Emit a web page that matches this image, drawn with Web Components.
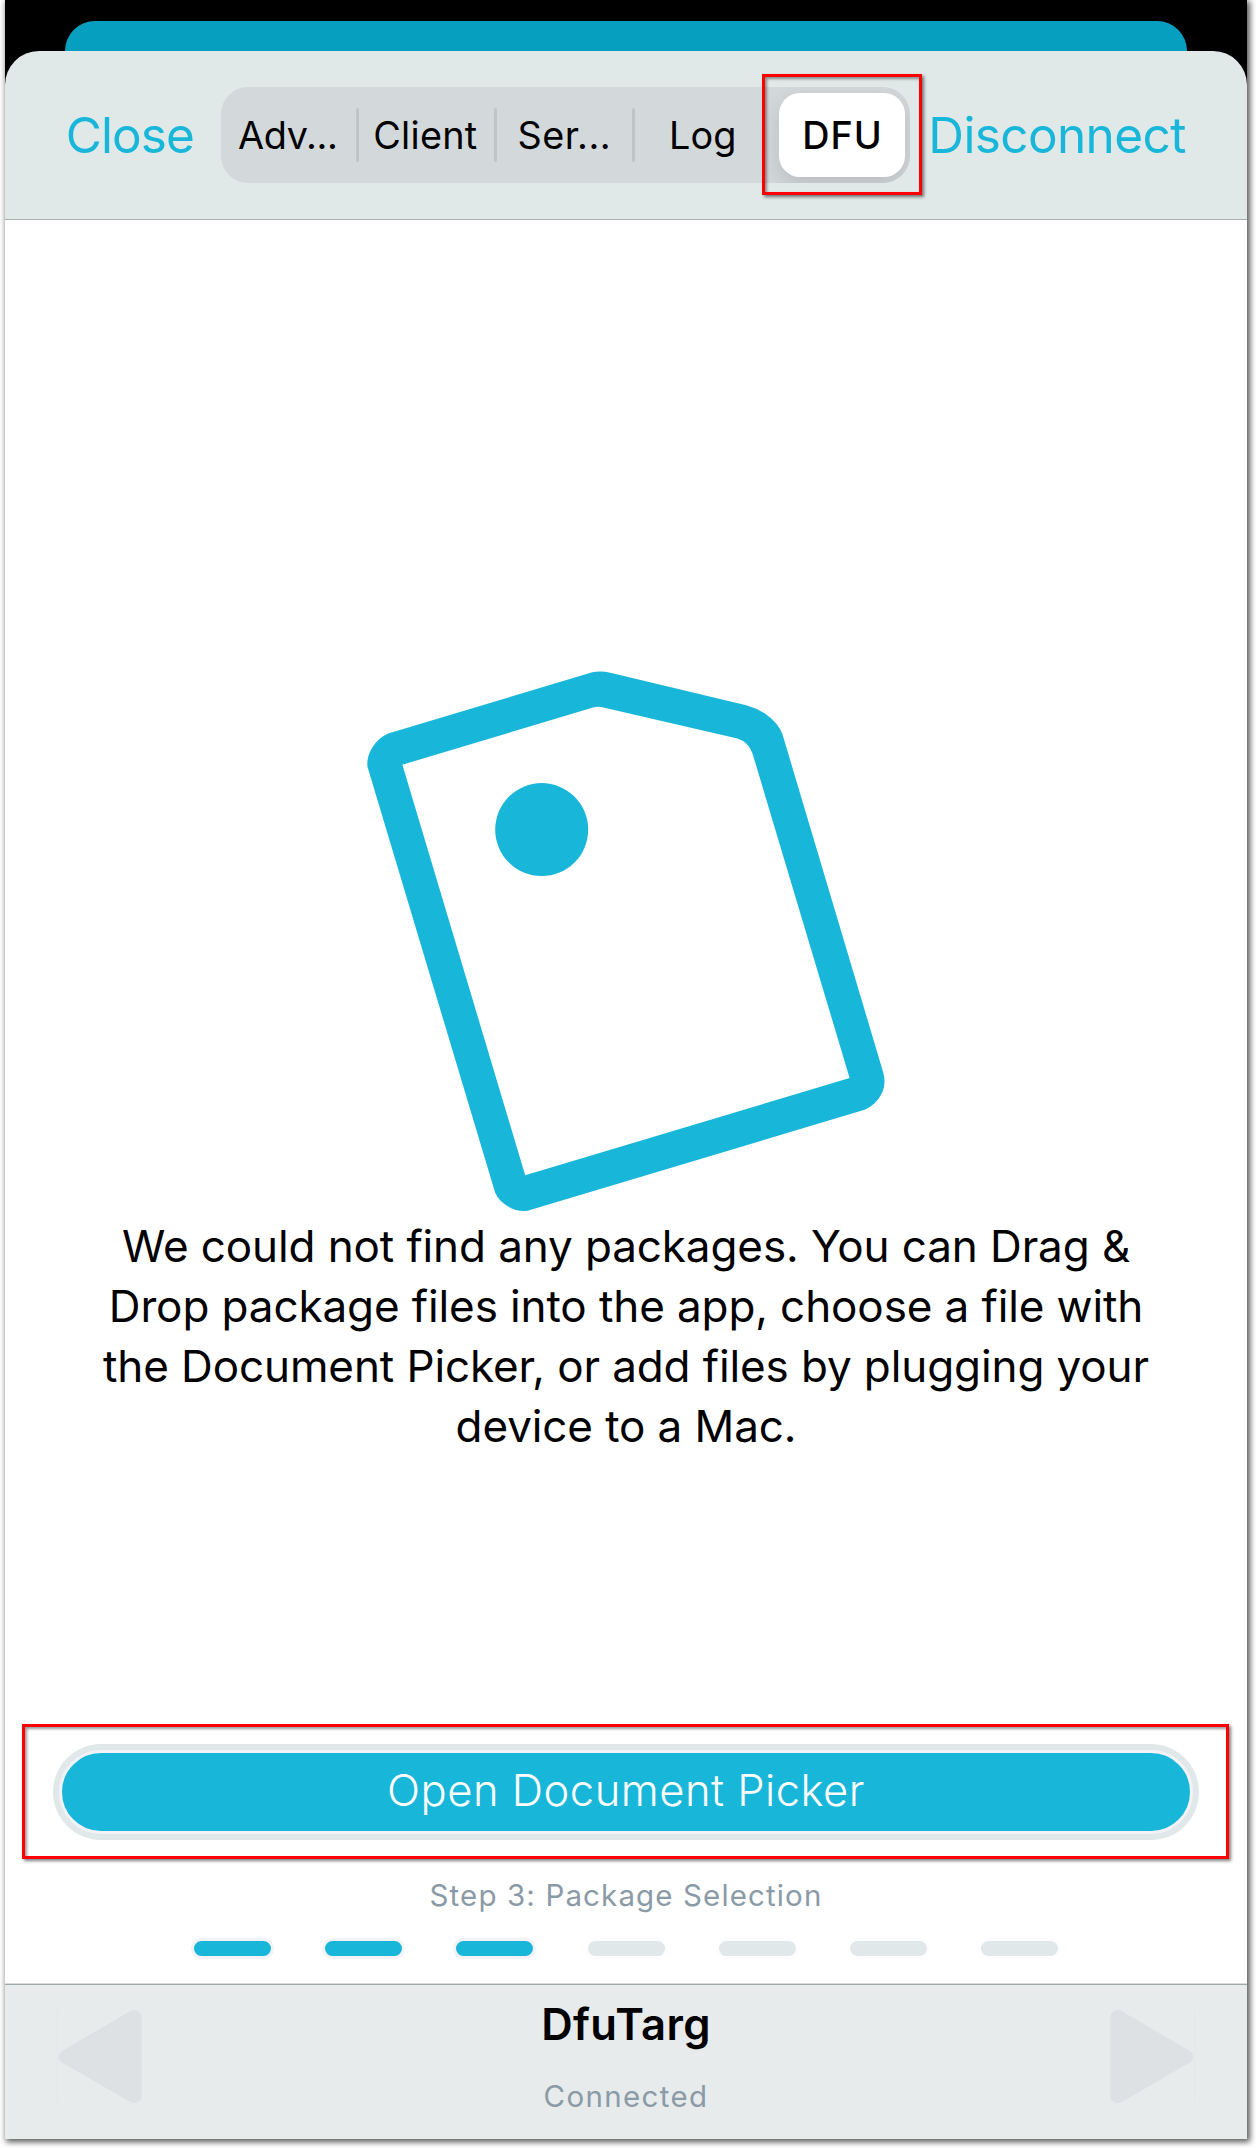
<!DOCTYPE html>
<html lang="en">
<head>
<meta charset="utf-8">
<title>DFU</title>
<style>
  html, body { margin: 0; background: #fff; }
  body { width: 1256px; height: 2148px; overflow: hidden; font-family: Inter, "Liberation Sans", sans-serif; color: #000; }
</style>
</head>
<body>
<phone-screen>
  <nav-header slot="header">
    <nav-link slot="start" style="--ls:-0.91px">Close</nav-link>
    <segmented-control>
      <segment-item style="--w:136px;--pad:17px;--ls:-0.35px">Adv...</segment-item>
      <segment-item divided style="--w:138px;--pad:15.2px;--ls:0.28px">Client</segment-item>
      <segment-item divided style="--w:138px;--pad:21.5px;--ls:0.47px">Ser...</segment-item>
      <segment-item divided style="--w:139px;--pad:35px;--ls:0.13px">Log</segment-item>
      <segment-item selected style="--w:138px;--pad:23.3px;--ls:1px">DFU</segment-item>
    </segmented-control>
    <nav-link slot="end" style="--ls:-0.62px">Disconnect</nav-link>
  </nav-header>
  <empty-state>
    <span>We could not find any packages. You can Drag &amp;</span>
    <span>Drop package files into the app, choose a file with</span>
    <span>the Document Picker, or add files by plugging your</span>
    <span>device to a Mac.</span>
  </empty-state>
  <callout-frame><pill-button>Open Document Picker</pill-button></callout-frame>
  <step-progress total="7" done="3">Step 3: Package Selection</step-progress>
  <device-bar slot="footer">
    <span>DfuTarg</span>
    <span slot="status">Connected</span>
  </device-bar>
</phone-screen>

<script>
const define = (name, html, setup) => {
  const template = document.createElement('template');
  template.innerHTML = html;
  customElements.define(name, class extends HTMLElement {
    constructor() {
      super();
      this.attachShadow({ mode: 'open' }).append(template.content.cloneNode(true));
    }
    connectedCallback() { if (setup) setup(this, this.shadowRoot); }
  });
};

define('phone-screen', `
<style>
  :host { display: flex; flex-direction: column; box-sizing: border-box; width: 1242px; height: 2139px; margin-left: 5px; background: #fff; box-shadow: 2px 2px 6px 1px rgba(0,0,0,.66); }
  .top { display: flex; flex-direction: column; padding-top: 21px; background: #000; }
  .behind { height: 30px; margin: 0 60px; border-radius: 30px 30px 0 0; background: #079fc0; }
  main { flex: 1; display: flex; flex-direction: column; }
</style>
<div class="top"><div class="behind"></div><slot name="header"></slot></div>
<main><slot></slot></main>
<slot name="footer"></slot>`);

define('nav-header', `
<style>
  :host { display: flex; align-items: center; box-sizing: border-box; height: 169px; padding-left: 60.7px; border-bottom: 1px solid #a9b0b1; border-radius: 34px 34px 0 0; background: #e0e9e8; }
  .start { width: 155.3px; }
  .end { margin-left: 18.3px; }
</style>
<div class="start"><slot name="start"></slot></div>
<slot></slot>
<div class="end"><slot name="end"></slot></div>`);

define('nav-link', `
<style>
  :host { display: block; color: #18b7da; font-size: 49.5px; line-height: 60px; letter-spacing: var(--ls); white-space: nowrap; }
</style>
<slot></slot>`);

define('segmented-control', `
<style>
  :host { position: relative; display: block; }
  .track { display: flex; width: 689px; height: 96px; border-radius: 27px; background: #d3d8db; overflow: hidden; }
  .mark { position: absolute; left: 541px; top: -13px; box-sizing: border-box; width: 160px; height: 121px; border: 3px solid #f00; box-shadow: 2px 2px 3px rgba(0,0,0,.5), inset 2px 2px 3px rgba(0,0,0,.4); }
</style>
<div class="track"><slot></slot></div><div class="mark"></div>`);

define('segment-item', `
<style>
  :host { display: flex; align-items: center; width: var(--w); font-size: 37.8px; line-height: 46px; letter-spacing: var(--ls); white-space: nowrap; }
  .label { padding-left: var(--pad); }
  .rule { display: none; width: 3px; height: 54px; margin-left: -1px; margin-right: -1px; border-radius: 1.5px; background: #c0c5c8; }
  :host([divided]) .rule { display: block; }
  :host([selected]) .label { display: flex; align-items: center; box-sizing: border-box; width: 126px; height: 84px; margin-left: 7px; border-radius: 21px; background: #fff; font-weight: 550; box-shadow: 0 8px 22px rgba(0,0,0,.13); }
</style>
<div class="rule"></div><div class="label"><slot></slot></div>`);

define('empty-state', `
<style>
  :host { display: flex; flex-direction: column; align-items: center; padding-top: 445px; font-size: 44px; line-height: 60px; letter-spacing: -0.1px; }
  svg { display: block; width: 530px; height: 550px; margin-bottom: 1px; }
  ::slotted(span) { display: block; white-space: nowrap; }
</style>
<svg viewBox="361.2 665 530 550" fill="#18b7da">
  <path fill-rule="evenodd" d="M388.400 733.600L592.500 672.300Q601 670.300 610.500 672.800L746.400 705.300Q758 708.500 767.400 715.200Q778.300 723 782.600 734L883.300 1072Q886.500 1083 882.500 1092.500Q877 1104 865.600 1109.500L527.800 1210.800Q516.500 1211.800 507.500 1206Q499 1201 495.300 1192.500L367.700 766.800Q366.600 757 372.500 747.500Q378.500 738 388.400 733.600ZM402.600 764.700L593.200 707.600Q598 706 602.500 707.200L737.600 738.600Q748.500 742 752.700 753.400L849.800 1078L525.400 1175.300Z"/>
  <circle cx="541.9" cy="829.6" r="46.5"/>
</svg>
<slot></slot>`);

define('callout-frame', `
<style>
  :host { display: block; box-sizing: border-box; width: 1207px; height: 135px; margin: 268px 0 0 17px; padding: 17px 27px 0 28px; border: 3px solid #f00; box-shadow: 2px 2px 3px rgba(0,0,0,.5), inset 2px 2px 3px rgba(0,0,0,.4); }
</style>
<slot></slot>`);

define('pill-button', `
<style>
  :host { display: block; box-sizing: border-box; height: 96px; padding: 6px; border-radius: 48px; background: #e0e8ea; }
  button { display: block; box-sizing: border-box; width: 100%; height: 84px; margin: 0; padding: 0 0 4px; border: 3px solid #f2f2f7; border-radius: 42px; background: #18b7da; color: #fff; font: 350 43.5px Inter, sans-serif; letter-spacing: 0.5px; }
</style>
<button><slot></slot></button>`);

define('step-progress', `
<style>
  :host { display: flex; flex-direction: column; align-items: center; padding-top: 18px; color: #8a9aa6; font-size: 29.5px; line-height: 36px; letter-spacing: 1.13px; }
  .dots { display: flex; gap: 48.17px; margin-top: 25px; margin-bottom: 24px; }
  i { display: block; width: 77px; height: 15px; border: 3px solid #fdfdfe; border-radius: 11px; background: #e0e8ea; }
  i.on { border-color: #f2f2f7; background: #18b7da; }
</style>
<div><slot></slot></div><div class="dots"></div>`, (host, root) => {
  const dots = root.querySelector('.dots');
  const total = +host.getAttribute('total'), done = +host.getAttribute('done');
  for (let n = 0; n < total; n++) {
    const dot = document.createElement('i');
    if (n < done) dot.className = 'on';
    dots.append(dot);
  }
});

define('device-bar', `
<style>
  :host { display: flex; justify-content: space-between; align-items: flex-start; box-sizing: border-box; height: 156px; padding: 26px 52px 0; border-top: 1px solid #d8dcdc; background: linear-gradient(#a0a9a9 1px, #e7ebeb 1px); }
  svg { display: block; width: 86px; height: 94px; }
  svg + .name + svg { transform: scaleX(-1); }
  .name { display: flex; flex-direction: column; align-items: center; font-size: 43.6px; font-weight: 600; line-height: 54px; letter-spacing: 0.36px; margin-top: -12px; }
  .status { margin-top: 26px; font-size: 29.5px; font-weight: 400; line-height: 36px; letter-spacing: 1.34px; color: #8a9aa6; }
</style>
<svg viewBox="57 2010 86 94"><path d="M57.500 2010V2102" stroke="#e2e7e8"/><path fill="#dde1e4" d="M62 2051L129.500 2011.500Q134 2009 138 2011Q141.700 2013.500 141.700 2018V2095Q141.700 2099.500 138 2102Q134 2104 129.500 2101.500L62 2062.500Q58.800 2060 58.800 2056.700Q58.800 2053.500 62 2051Z"/></svg>
<div class="name"><slot></slot><div class="status"><slot name="status"></slot></div></div>
<svg viewBox="57 2010 86 94"><path d="M57.500 2010V2102" stroke="#e2e7e8"/><path fill="#dde1e4" d="M62 2051L129.500 2011.500Q134 2009 138 2011Q141.700 2013.500 141.700 2018V2095Q141.700 2099.500 138 2102Q134 2104 129.500 2101.500L62 2062.500Q58.800 2060 58.800 2056.700Q58.800 2053.500 62 2051Z"/></svg>`);
</script>
</body>
</html>
